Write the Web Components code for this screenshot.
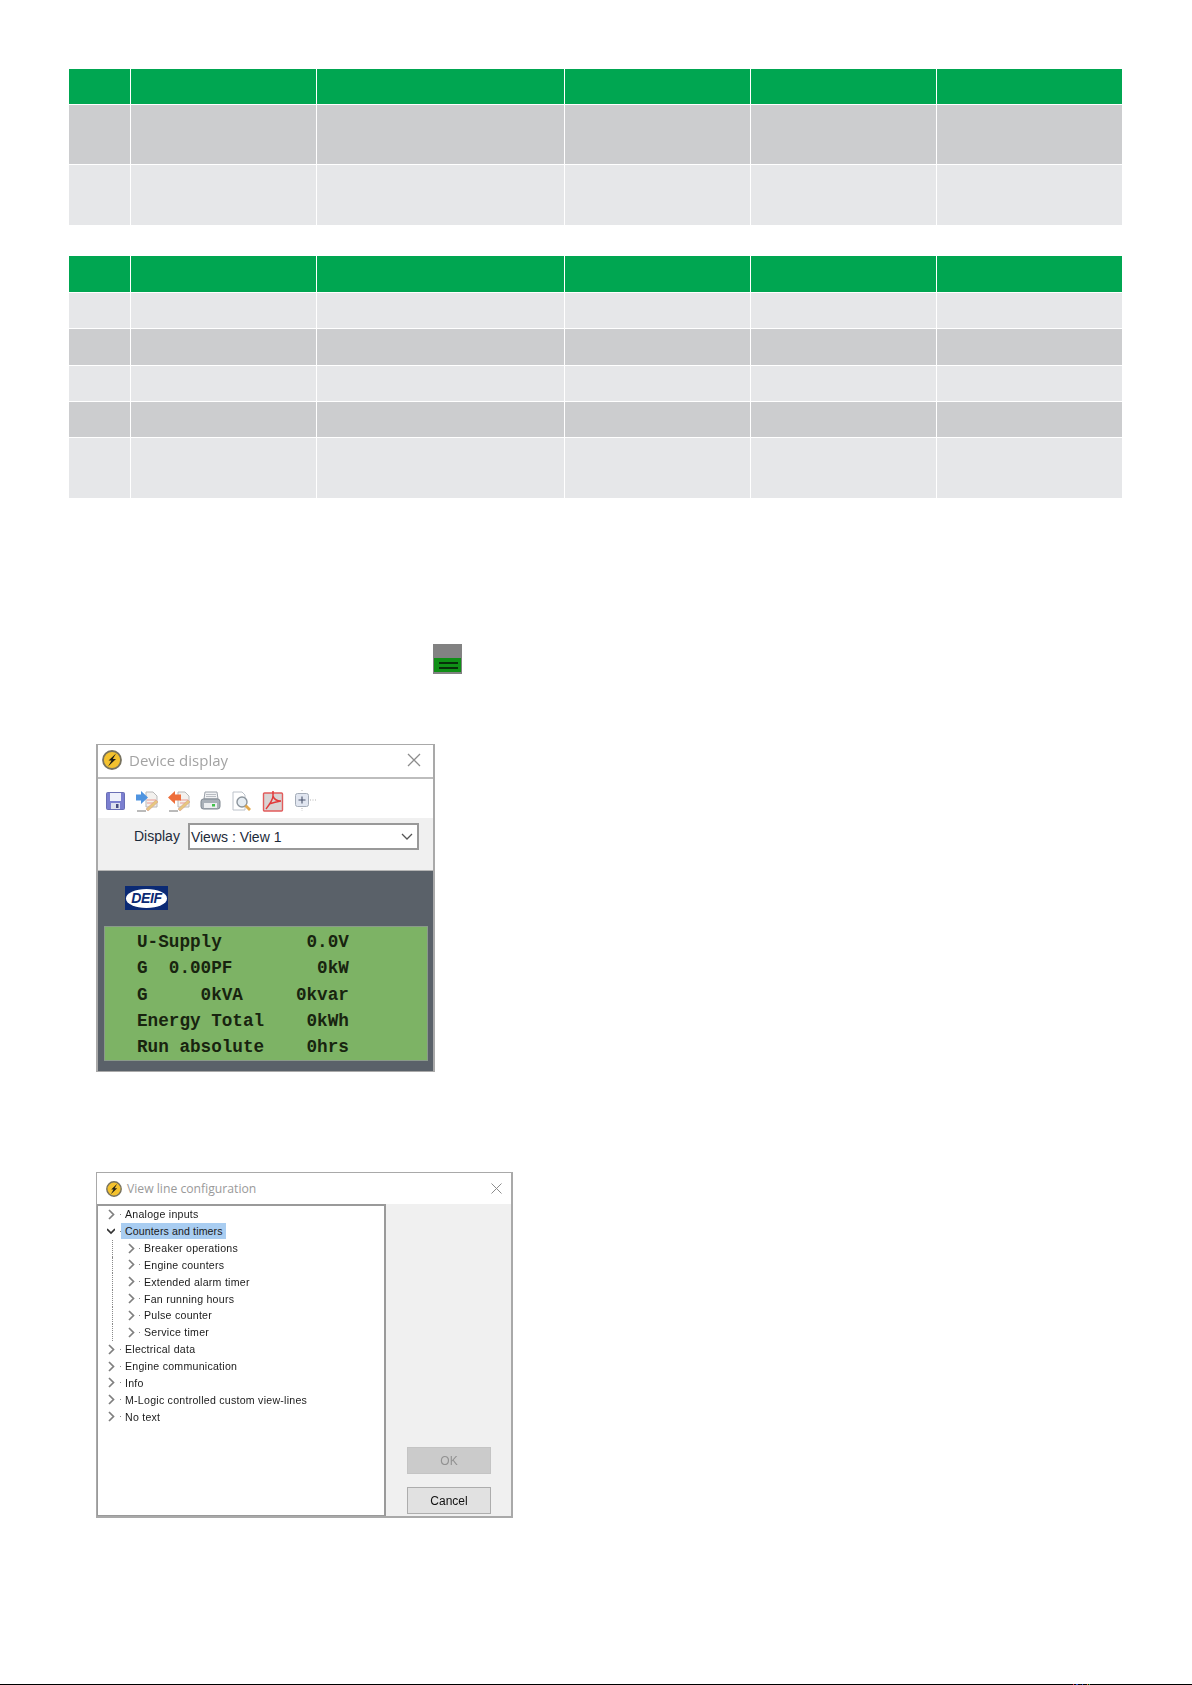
<!doctype html>
<html>
<head>
<meta charset="utf-8">
<title>Device display</title>
<style>
  html, body { margin: 0; padding: 0; background: #fff; }
  body { font-family: "Liberation Sans", Arial, sans-serif; }
</style>
</head>
<body>

<template id="spec-table-tpl">
  <style>
    :host { display: block; margin-left: 69px; width: 1053px; }
    .grid { display: grid; grid-template-columns: 61px 185px 247px 185px 185px 185px; gap: 1px; }
    .cell { background: #e6e7e9; }
    .cell.dark { background: #cccdcf; }
    .cell.head { background: #00a651; }
  </style>
  <div class="grid"></div>
</template>

<template id="device-window-tpl">
  <style>
    :host { display: block; margin-left: 96px; width: 339px; height: 328px; box-sizing: border-box; border: 2px solid #a9a9a9; border-top-width: 1px; background: #fff; }
    .inner { display: flex; flex-direction: column; height: 100%; filter: blur(0.45px); }
    .title { display: flex; align-items: center; height: 34px; flex: none; padding: 0 11px 3px 4px; gap: 7px; border-bottom: 2px solid #bdbdbd; box-sizing: border-box; }
    .title span { font: 15px "Open Sans", "Liberation Sans", sans-serif; color: #a3a3a3; flex: 1; }
    .tools { display: flex; align-items: center; height: 36px; flex: none; margin-top: 3px; padding: 2px 0 0 7px; box-sizing: border-box; gap: 10px; background: #fff; }
    .tools svg { flex: none; display: block; }
    .row { display: flex; flex: none; height: 53px; background: #f0f0f0; padding: 5px 14px 0 36px; box-sizing: border-box; gap: 8px; border-bottom: 1px solid #b5b5b5; }
    .row label { font: 14px/27px "Liberation Sans", sans-serif; color: #1c2a3a; }
    .select { flex: 1; height: 27px; box-sizing: border-box; border: 2px solid #999; background: #fff; display: flex; align-items: center; justify-content: space-between; padding: 0 4px 0 1px; font: 14px "Liberation Sans", sans-serif; color: #1c2a3a; }
    .lcd-wrap { flex: 1; background: #5a6169; padding: 15px 5px 10px 6px; display: flex; flex-direction: column; }
    .logo { width: 43px; height: 24px; flex: none; margin-left: 21px; background: #0b2a74; display: flex; align-items: center; justify-content: center; }
    .logo b { display: block; width: 41px; height: 19px; border-radius: 50%; background: #fff; color: #0b2a74; font: italic bold 14px/19px "Liberation Sans", sans-serif; text-align: center; letter-spacing: -0.4px; }
    .lcd { flex: 1; margin-top: 16px; background: #7db365; border: 1px solid #8a9a8a; padding: 2px 0 0 32px; font: bold 17.67px/26.25px "Liberation Mono", monospace; color: #18240f; white-space: pre; box-sizing: border-box; }
  </style>
  <div class="inner">
    <div class="title">
      <bolt-icon size="20"></bolt-icon>
      <span>Device display</span>
      <svg width="16" height="16" viewBox="0 0 16 16"><path d="M2 2 14 14M14 2 2 14" stroke="#8c8c8c" stroke-width="1.3" fill="none"/></svg>
    </div>
    <div class="tools">
      <!-- save -->
      <svg width="21" height="20" viewBox="0 0 21 20">
        <rect x="1.5" y="1.5" width="18" height="17" rx="1" fill="#7b7fd0" stroke="#6a6fb5"/>
        <rect x="5" y="2" width="11" height="8" fill="#eef0fa"/>
        <rect x="6" y="12" width="9" height="6" fill="#dcdfee"/>
        <rect x="11" y="13" width="2.5" height="4" fill="#454a80"/>
      </svg>
      <!-- send to device -->
      <svg width="22" height="22" viewBox="0 0 22 22">
        <path d="M10 2h7l4 4v11H10z" fill="#f3f1ee" stroke="#b9b9b9"/>
        <path d="M11 10h9M11 13h7" stroke="#eeb7b0" stroke-width="1.500"/>
        <path d="M0 4.500h5V1l7 6.500L5 14v-3.500H0z" fill="#4f94e0"/>
        <path d="M10 19 20 10l2 2-10 9z" fill="#e6c77e" stroke="#d9a08c" stroke-width=".6"/>
        <path d="M1 21h9" stroke="#777" stroke-width="1"/>
      </svg>
      <!-- read from device -->
      <svg width="22" height="22" viewBox="0 0 22 22">
        <path d="M10 2h7l4 4v11H10z" fill="#f3f1ee" stroke="#b9b9b9"/>
        <path d="M12 10h8M12 13h6" stroke="#eeb7b0" stroke-width="1.500"/>
        <path d="M13 4.500H7V1L0 7.500 7 14v-3.500h6z" fill="#ee6f3c"/>
        <path d="M10 19 20 10l2 2-10 9z" fill="#e6c77e" stroke="#d9a08c" stroke-width=".6"/>
        <path d="M1 21h9" stroke="#777" stroke-width="1"/>
      </svg>
      <!-- print -->
      <svg width="21" height="20" viewBox="0 0 21 20">
        <path d="M5 1h12l1 7H4z" fill="#f1f2f4" stroke="#9aa0a8"/>
        <path d="M6 3.500h10M6 5.500h10" stroke="#b8bcc2"/>
        <rect x="1" y="8" width="19" height="10" rx="2.500" fill="#a9b0b8" stroke="#7f8790"/>
        <rect x="4" y="12" width="13" height="5" fill="#eceef0"/>
        <rect x="12" y="13" width="3" height="2.500" fill="#3fc04a"/>
      </svg>
      <!-- preview -->
      <svg width="21" height="21" viewBox="0 0 21 21">
        <path d="M2 1h9l3 3v15H2z" fill="#fff" stroke="#bcc2ca"/>
        <circle cx="11" cy="11" r="5" fill="#e6edf3" stroke="#8b949c" stroke-width="1.400"/>
        <path d="M14.500 14.500l4.500 4.500" stroke="#e2a84c" stroke-width="2.800"/>
      </svg>
      <!-- pdf -->
      <svg width="22" height="22" viewBox="0 0 22 22">
        <rect x="1.500" y="3" width="19" height="18" rx="1" fill="#d9d4d4" stroke="#e25b5b" stroke-width="1.400"/>
        <path d="M11 1v5c0 4-4 9-7 13M11 6c1 3 4 5 8 5M7 14c3-1 6-2 12-3" fill="none" stroke="#e23a3a" stroke-width="1.500"/>
      </svg>
      <!-- zoom box -->
      <svg width="23" height="22" viewBox="0 0 23 22">
        <rect x="1.500" y="3.500" width="13" height="13" rx="2" fill="#e1e6f0" stroke="#a4acb8"/>
        <path d="M8 6.500v7M4.500 10h7" stroke="#48506a" stroke-width="1.100"/>
        <path d="M8 0v2M8 18v3M16 10h6" stroke="#b5b5b5" stroke-dasharray="1 1.500"/>
      </svg>
    </div>
    <div class="row">
      <label>Display</label>
      <div class="select">
        <span>Views : View 1</span>
        <svg width="12" height="8" viewBox="0 0 12 8"><path d="M1 1l5 5 5-5" fill="none" stroke="#555" stroke-width="1.300"/></svg>
      </div>
    </div>
    <div class="lcd-wrap">
      <div class="logo"><b>DEIF</b></div>
      <div class="lcd"><slot></slot></div>
    </div>
  </div>
</template>

<template id="view-config-tpl">
  <style>
    :host { display: block; margin-left: 96px; width: 417px; height: 346px; box-sizing: border-box; border: 2px solid #a9a9a9; border-left-width: 1px; border-top-width: 1px; background: #f0f0f0; }
    .inner { display: flex; flex-direction: column; height: 100%; filter: blur(0.4px); }
    .title { display: flex; align-items: center; flex: none; height: 31px; background: #fff; padding: 0 8px 0 9px; gap: 5px; box-sizing: border-box; }
    .title span { flex: 1; font: 12.2px "Open Sans", "Liberation Sans", sans-serif; color: #9a9a9a; }
    .body { flex: 1; display: flex; min-height: 0; }
    .tree { width: 289px; flex: none; box-sizing: border-box; background: #fff; border: 2px solid #9a9a9a; border-left-width: 1px; border-bottom-width: 1px; }
    .side { flex: 1; display: flex; flex-direction: column; justify-content: flex-end; align-items: center; gap: 13px; padding: 0 0 2px 1px; }
    button { width: 84px; height: 27px; padding: 0; font: 12px "Liberation Sans", sans-serif; color: #111; background: #e1e1e1; border: 1px solid #adadad; box-sizing: border-box; }
    button[disabled] { background: #cbcbcb; border-color: #c4c4c4; color: #929292; }
  </style>
  <div class="inner">
    <div class="title">
      <bolt-icon size="16"></bolt-icon>
      <span>View line configuration</span>
      <svg width="13" height="13" viewBox="0 0 13 13"><path d="M1.500 1.500 11.500 11.500M11.500 1.500 1.500 11.500" stroke="#8c8c8c" stroke-width="1" fill="none"/></svg>
    </div>
    <div class="body">
      <div class="tree"><slot></slot></div>
      <div class="side">
        <button disabled>OK</button>
        <button>Cancel</button>
      </div>
    </div>
  </div>
</template>

<template id="tree-row-tpl">
  <style>
    :host { display: flex; align-items: center; height: 16.85px; font: 10.6px "Liberation Sans", sans-serif; color: #1a1a1a; position: relative; }
    .arrow { flex: none; width: 8px; height: 11px; margin: 0 1px 0 9px; }
    :host([level="2"]) .arrow { margin: 0 0 0 29px; }
    .dot { flex: none; width: 1px; height: 1px; background: #888; margin: 0 3px 0 4px; }
    .label { padding: 0 3px 0 1px; line-height: 16px; letter-spacing: .25px; white-space: nowrap; }
    :host([selected]) .label { background: #a9cdf1; padding: 0 3px 0 4px; letter-spacing: .12px; }
    :host([selected]) .dot { margin-right: 0; }
    :host([level="2"])::before { content: ""; position: absolute; left: 14px; top: 0; bottom: 0; border-left: 1px dotted #8a8a8a; }
  </style>
  <svg class="arrow" viewBox="0 0 8 11"><path d="" fill="none" stroke="#7f7f7f" stroke-width="1.700"/></svg>
  <span class="dot"></span>
  <span class="label"><slot></slot></span>
</template>

<script>
  function fromTemplate(el, id) {
    el.attachShadow({mode: 'open'});
    el.shadowRoot.appendChild(document.getElementById(id).content.cloneNode(true));
  }

  // row heights come in through the "rows" attribute: height:kind, kind is h/d/l
  class SpecTable extends HTMLElement {
    constructor() {
      super();
      fromTemplate(this, 'spec-table-tpl');
    }

    connectedCallback() {
      const grid = this.shadowRoot.querySelector('.grid');
      const rows = this.getAttribute('rows').split(' ').map(r => r.split(':'));

      grid.style.gridTemplateRows = rows.map(r => r[0] + 'px').join(' ');
      rows.forEach(r => {
        for (let i = 0; i < 6; i++) {
          const cell = document.createElement('div');
          cell.className = 'cell' + (r[1] === 'h' ? ' head' : r[1] === 'd' ? ' dark' : '');
          grid.appendChild(cell);
        }
      });
    }
  }

  class BoltIcon extends HTMLElement {
    constructor() {
      super();
      this.attachShadow({mode: 'open'});
      const size = this.getAttribute('size') || 16;
      this.shadowRoot.innerHTML = `
        <style>:host { display: block; flex: none; line-height: 0; }</style>
        <svg width="${size}" height="${size}" viewBox="0 0 20 20">
          <circle cx="10" cy="10" r="9" fill="#f4c22e" stroke="#77725f" stroke-width="1.800"/>
          <path d="M14 3.500 6.500 10.500h3L6 16.500l8-7.500h-3.200z" fill="#1f1e16"/>
        </svg>`;
    }
  }

  class StatusIcon extends HTMLElement {
    constructor() {
      super();
      this.attachShadow({mode: 'open'});
      this.shadowRoot.innerHTML = `
        <style>
          :host { display: block; margin-left: 433px; width: 29px; height: 30px; box-sizing: border-box; background: #828282; padding: 14px 1px 2px 1px; }
          .led { height: 14px; background: #0f8f16; display: flex; flex-direction: column; justify-content: center; gap: 3px; padding-left: 5px; box-sizing: border-box; filter: blur(.4px); }
          .led i { display: block; height: 2px; width: 19px; background: #07300a; }
        </style>
        <div class="led"><i></i><i></i></div>`;
    }
  }

  class DeviceWindow extends HTMLElement {
    constructor() {
      super();
      fromTemplate(this, 'device-window-tpl');
    }
  }

  class ViewConfig extends HTMLElement {
    constructor() {
      super();
      fromTemplate(this, 'view-config-tpl');
    }
  }

  class TreeRow extends HTMLElement {
    constructor() {
      super();
      fromTemplate(this, 'tree-row-tpl');
    }

    connectedCallback() {
      const open = this.hasAttribute('open');
      const path = this.shadowRoot.querySelector('.arrow path');
      path.setAttribute('d', open ? 'M0 3l4 4 4-4' : 'M2 1l4.500 4.500L2 10');
      if (open) path.setAttribute('stroke', '#333');
    }
  }

  // the black edge at the foot of the page, with its few coloured specks
  class PageEdge extends HTMLElement {
    constructor() {
      super();
      this.attachShadow({mode: 'open'});
      const specks = ['#e0304a', '#000', '#000', '#2a50c8', '#2a50c8', '#000', '#000', '#111', '#000', '#2a50c8', '#000', '#000', '#000', '#000', '#d8702a', '#000', '#3cb04a'];
      this.shadowRoot.innerHTML = `
        <style>
          :host { display: flex; height: 1px; background: #000; padding-left: 1073px; }
          i { display: block; width: 1px; height: 1px; }
        </style>` + specks.map(c => `<i style="background:${c}"></i>`).join('');
    }
  }

  customElements.define('spec-table', SpecTable);
  customElements.define('bolt-icon', BoltIcon);
  customElements.define('status-icon', StatusIcon);
  customElements.define('device-window', DeviceWindow);
  customElements.define('view-config', ViewConfig);
  customElements.define('tree-row', TreeRow);
  customElements.define('page-edge', PageEdge);
</script>

<spec-table rows="35:h 59:d 60:l" style="margin-top:69px"></spec-table>
<spec-table rows="36:h 35:l 36:d 35:l 35:d 60:l" style="margin-top:31px"></spec-table>

<status-icon style="margin-top:146px"></status-icon>

<device-window style="margin-top:70px">U-Supply        0.0V
G  0.00PF        0kW
G     0kVA     0kvar
Energy Total    0kWh
Run absolute    0hrs</device-window>

<view-config style="margin-top:100px">
  <tree-row>Analoge inputs</tree-row>
  <tree-row open selected>Counters and timers</tree-row>
  <tree-row level="2">Breaker operations</tree-row>
  <tree-row level="2">Engine counters</tree-row>
  <tree-row level="2">Extended alarm timer</tree-row>
  <tree-row level="2">Fan running hours</tree-row>
  <tree-row level="2">Pulse counter</tree-row>
  <tree-row level="2">Service timer</tree-row>
  <tree-row>Electrical data</tree-row>
  <tree-row>Engine communication</tree-row>
  <tree-row>Info</tree-row>
  <tree-row>M-Logic controlled custom view-lines</tree-row>
  <tree-row>No text</tree-row>
</view-config>

<page-edge style="margin-top:166px"></page-edge>

</body>
</html>
